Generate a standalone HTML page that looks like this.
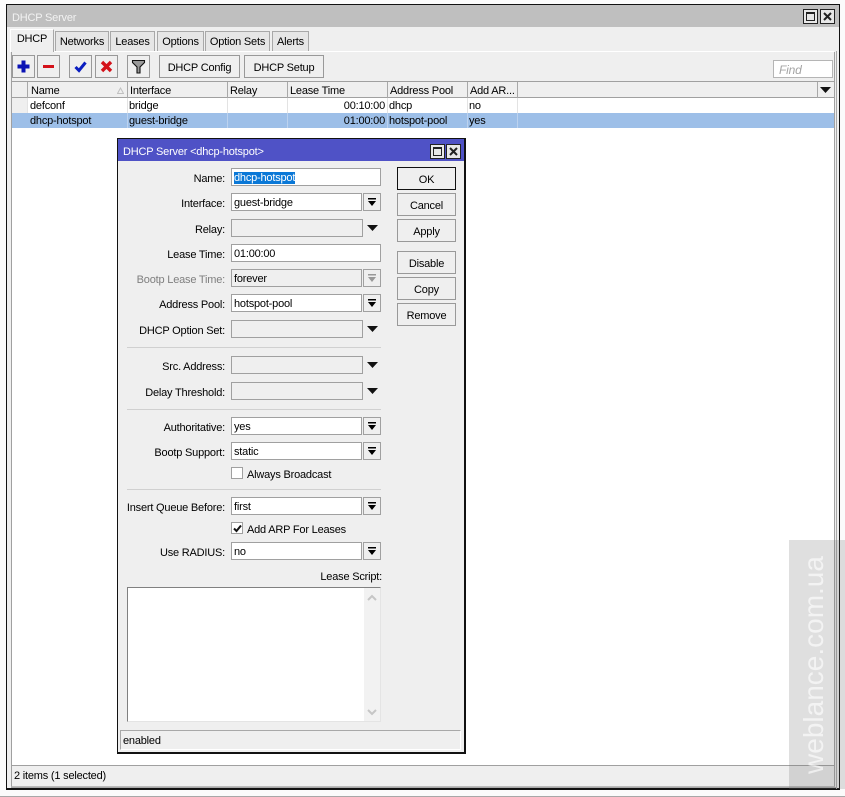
<!DOCTYPE html>
<html><head><meta charset="utf-8">
<style>
html,body{margin:0;padding:0;background:#fff;}
#r{position:relative;width:845px;height:797px;overflow:hidden;background:#fbfbfb;font:11px/14px "Liberation Sans",sans-serif;letter-spacing:-.2px;color:#000;}
#r div,#r svg{position:absolute;box-sizing:border-box;}
.t{white-space:nowrap;}
.tab{top:31px;height:20px;background:#e6e6e6;border:1px solid #a8a8a8;border-bottom:0;text-align:center;line-height:21px;white-space:nowrap;}
.b{background:#efefef;border:1px solid #999;text-align:center;white-space:nowrap;line-height:24px;height:23px;}
.h{top:82px;height:16px;border-right:1px solid #a8a8a8;line-height:19px;padding-left:2px;white-space:nowrap;}
.c{height:15px;line-height:17px;padding-left:1px;border-right:1px solid #e3e3e3;white-space:nowrap;}
.l{left:118px;width:107px;text-align:right;white-space:nowrap;margin-top:1px;}
.i{background:#fff;border:1px solid #a0a0a0;height:18px;line-height:19px;padding-left:2px;white-space:nowrap;left:231px;width:131px;}
.w{width:150px;}
.g{background:#efefef;width:132px;}
.d{left:363px;width:18px;height:18px;background:#efefef;border:1px solid #a0a0a0;}
.s{left:127px;width:254px;height:1px;background:#d0d0d0;}
.tr{left:367px;width:11px;height:6px;}
.wb{background:#e8e8e8;border:1px solid #222;}
</style></head><body>
<div id="r">
<!-- main window -->
<div style="left:0;top:796px;width:845px;height:1px;background:#a8a8a8"></div>
<div style="left:6px;top:4px;width:834px;height:786px;background:#efefef;border:1px solid #111;border-width:1px 1px 2px 1px"></div>
<div style="left:7px;top:5px;width:832px;height:22px;background:#bfbfbf"></div>
<div class="t" style="left:12px;top:11px;color:#f2f2f2;">DHCP Server</div>
<div class="wb" style="left:803px;top:9px;width:15px;height:15px"><div style="left:2px;top:2px;width:9px;height:9px;border:1px solid #222;border-top-width:2px"></div></div>
<div class="wb" style="left:820px;top:9px;width:15px;height:15px"><svg style="left:2px;top:2px" width="9" height="9"><path d="M1 1L8 8M8 1L1 8" stroke="#222" stroke-width="2"/></svg></div>

<!-- tabs -->
<div style="left:54px;top:51px;width:780px;height:1px;background:#fff"></div>
<div style="left:10px;top:29px;width:44px;height:23px;background:#efefef;border:1px solid #fff;border-bottom:0;border-right-color:#a8a8a8;text-align:center;line-height:19px;">DHCP</div>
<div class="tab" style="left:55px;width:54px">Networks</div>
<div class="tab" style="left:110px;width:45px">Leases</div>
<div class="tab" style="left:157px;width:47px">Options</div>
<div class="tab" style="left:205px;width:65px">Option Sets</div>
<div class="tab" style="left:272px;width:37px">Alerts</div>

<!-- toolbar -->
<div class="b" style="left:12px;top:55px;width:23px"><svg style="left:3px;top:3px" width="15" height="15"><path d="M7.5 1.5V13.5M1.5 7.5H13.5" stroke="#0a12b4" stroke-width="4"/></svg></div>
<div class="b" style="left:37px;top:55px;width:23px"><svg style="left:3px;top:3px" width="15" height="15"><path d="M2 7.5H13" stroke="#d4121a" stroke-width="3"/></svg></div>
<div class="b" style="left:69px;top:55px;width:23px"><svg style="left:3px;top:3px" width="15" height="15"><path d="M2.5 8L6 11.5L12.5 3.5" fill="none" stroke="#0a1ec0" stroke-width="3"/></svg></div>
<div class="b" style="left:95px;top:55px;width:23px"><svg style="left:3px;top:3px" width="15" height="15"><path d="M3 3L12 12M12 3L3 12" stroke="#d4121a" stroke-width="3.4"/></svg></div>
<div class="b" style="left:127px;top:55px;width:23px"><svg style="left:3px;top:3px" width="15" height="15"><path d="M1.5 1.5H13.5V3.5L9 8V14L6 14V8L1.5 3.5Z" fill="#9a9a9a" stroke="#111" stroke-width="1.1"/></svg></div>
<div class="b" style="left:159px;top:55px;width:81px">DHCP Config</div>
<div class="b" style="left:244px;top:55px;width:80px">DHCP Setup</div>
<div style="left:773px;top:60px;width:60px;height:18px;background:#fff;border:1px solid #b5b5b5;font-style:italic;color:#a5a5a5;padding-left:5px;font-size:12px;line-height:18px">Find</div>

<!-- frame lines and table -->
<div style="left:11px;top:52px;width:1px;height:30px;background:#a0a0a0"></div>
<div style="left:834px;top:52px;width:1px;height:30px;background:#a0a0a0"></div>
<div style="left:11px;top:81px;width:824px;height:685px;background:#fff;border:1px solid #a0a0a0;border-bottom:0"></div>
<div style="left:12px;top:82px;width:822px;height:16px;background:#efefef;border-bottom:1px solid #a0a0a0"></div>
<div class="h" style="left:12px;width:16px"></div>
<div class="h" style="left:28px;width:100px;padding-left:3px">Name</div>
<svg style="left:117px;top:87px" width="7" height="7"><path d="M3.5 1L6.5 6.5H0.5Z" fill="none" stroke="#c0c0c0"/></svg>
<div class="h" style="left:128px;width:100px">Interface</div>
<div class="h" style="left:228px;width:60px">Relay</div>
<div class="h" style="left:288px;width:100px">Lease Time</div>
<div class="h" style="left:388px;width:80px">Address Pool</div>
<div class="h" style="left:468px;width:50px">Add AR...</div>
<div class="h" style="left:817px;width:17px;border-left:1px solid #a8a8a8;border-right:0"></div>
<svg style="left:820px;top:87px" width="11" height="7"><path d="M0 0H11L5.5 6Z" fill="#111"/></svg>

<div style="left:12px;top:98px;width:16px;height:15px;background:#efefef;border-right:1px solid #e3e3e3"></div>
<div style="left:12px;top:113px;width:822px;height:15px;background:#9dbfe8"></div>
<div class="c" style="left:28px;top:98px;width:100px;padding-left:2px">defconf</div>
<div class="c" style="left:128px;top:98px;width:100px">bridge</div>
<div class="c" style="left:228px;top:98px;width:60px"></div>
<div class="c" style="left:288px;top:98px;width:100px;text-align:right;padding-right:2px">00:10:00</div>
<div class="c" style="left:388px;top:98px;width:80px">dhcp</div>
<div class="c" style="left:468px;top:98px;width:50px">no</div>
<div class="c" style="left:28px;top:113px;width:100px;padding-left:2px;border-color:#bcd2ee">dhcp-hotspot</div>
<div class="c" style="left:128px;top:113px;width:100px;border-color:#bcd2ee">guest-bridge</div>
<div class="c" style="left:228px;top:113px;width:60px;border-color:#bcd2ee"></div>
<div class="c" style="left:288px;top:113px;width:100px;text-align:right;padding-right:2px;border-color:#bcd2ee">01:00:00</div>
<div class="c" style="left:388px;top:113px;width:80px;border-color:#bcd2ee">hotspot-pool</div>
<div class="c" style="left:468px;top:113px;width:50px;border-color:#bcd2ee">yes</div>

<!-- status -->
<div style="left:11px;top:765px;width:824px;height:22px;background:#efefef;border:1px solid #a0a0a0;border-bottom-color:#bbb"></div>
<div class="t" style="left:14px;top:769px">2 items (1 selected)</div>
<div style="left:836px;top:51px;width:1px;height:738px;background:#a8a8a8"></div>
<div style="left:11px;top:787px;width:826px;height:1px;background:#a8a8a8"></div>

<!-- dialog -->
<div style="left:117px;top:138px;width:349px;height:616px;background:#efefef;border:1px solid #111;border-width:1px 2px 2px 1px"></div>
<div style="left:118px;top:139px;width:346px;height:22px;background:#4f52c6"></div>
<div class="t" style="left:123px;top:145px;color:#fff">DHCP Server &lt;dhcp-hotspot&gt;</div>
<div class="wb" style="left:430px;top:144px;width:15px;height:15px"><div style="left:2px;top:2px;width:9px;height:9px;border:1px solid #222;border-top-width:2px"></div></div>
<div class="wb" style="left:446px;top:144px;width:15px;height:15px"><svg style="left:2px;top:2px" width="9" height="9"><path d="M1 1L8 8M8 1L1 8" stroke="#222" stroke-width="2"/></svg></div>

<div class="b" style="left:397px;top:167px;width:59px;border-color:#111">OK</div>
<div class="b" style="left:397px;top:193px;width:59px">Cancel</div>
<div class="b" style="left:397px;top:219px;width:59px">Apply</div>
<div class="b" style="left:397px;top:251px;width:59px">Disable</div>
<div class="b" style="left:397px;top:277px;width:59px">Copy</div>
<div class="b" style="left:397px;top:303px;width:59px">Remove</div>

<div class="l t" style="top:171px">Name:</div>
<div class="i w" style="top:168px"><span style="background:#0a78d7;color:#fff;">dhcp-hotspot</span></div>
<div class="l t" style="top:196px">Interface:</div>
<div class="i" style="top:193px">guest-bridge</div>
<div class="d" style="top:193px"><svg style="left:3px;top:2px" width="10" height="12"><path d="M1 2H9V3.5H1ZM1 5H9L5 10Z" fill="#000"/></svg></div>
<div class="l t" style="top:222px">Relay:</div>
<div class="i g" style="top:219px"></div>
<svg class="tr" style="top:225px" width="11" height="6"><path d="M0 0H11L5.5 6Z" fill="#111"/></svg>
<div class="l t" style="top:247px">Lease Time:</div>
<div class="i w" style="top:244px">01:00:00</div>
<div class="l t" style="top:272px;color:#7f7f7f">Bootp Lease Time:</div>
<div class="i" style="top:269px;background:#efefef">forever</div>
<div class="d" style="top:269px"><svg style="left:3px;top:2px" width="10" height="12"><path d="M1 2H9V3.5H1ZM1 5H9L5 10Z" fill="#999"/></svg></div>
<div class="l t" style="top:297px">Address Pool:</div>
<div class="i" style="top:294px">hotspot-pool</div>
<div class="d" style="top:294px"><svg style="left:3px;top:2px" width="10" height="12"><path d="M1 2H9V3.5H1ZM1 5H9L5 10Z" fill="#000"/></svg></div>
<div class="l t" style="top:323px">DHCP Option Set:</div>
<div class="i g" style="top:320px"></div>
<svg class="tr" style="top:326px" width="11" height="6"><path d="M0 0H11L5.5 6Z" fill="#111"/></svg>
<div class="s" style="top:347px"></div>
<div class="l t" style="top:359px">Src. Address:</div>
<div class="i g" style="top:356px"></div>
<svg class="tr" style="top:362px" width="11" height="6"><path d="M0 0H11L5.5 6Z" fill="#111"/></svg>
<div class="l t" style="top:385px">Delay Threshold:</div>
<div class="i g" style="top:382px"></div>
<svg class="tr" style="top:388px" width="11" height="6"><path d="M0 0H11L5.5 6Z" fill="#111"/></svg>
<div class="s" style="top:409px"></div>
<div class="l t" style="top:420px">Authoritative:</div>
<div class="i" style="top:417px">yes</div>
<div class="d" style="top:417px"><svg style="left:3px;top:2px" width="10" height="12"><path d="M1 2H9V3.5H1ZM1 5H9L5 10Z" fill="#000"/></svg></div>
<div class="l t" style="top:445px">Bootp Support:</div>
<div class="i" style="top:442px">static</div>
<div class="d" style="top:442px"><svg style="left:3px;top:2px" width="10" height="12"><path d="M1 2H9V3.5H1ZM1 5H9L5 10Z" fill="#000"/></svg></div>
<div style="left:231px;top:467px;width:12px;height:12px;background:#fff;border:1px solid #a0a0a0"></div>
<div class="t" style="left:247px;top:468px">Always Broadcast</div>
<div class="s" style="top:489px"></div>
<div class="l t" style="top:500px">Insert Queue Before:</div>
<div class="i" style="top:497px">first</div>
<div class="d" style="top:497px"><svg style="left:3px;top:2px" width="10" height="12"><path d="M1 2H9V3.5H1ZM1 5H9L5 10Z" fill="#000"/></svg></div>
<div style="left:231px;top:522px;width:12px;height:12px;background:#fff;border:1px solid #a0a0a0"><svg style="left:1px;top:1px" width="9" height="9"><path d="M1 4.5L3.5 7L8 1.5" fill="none" stroke="#111" stroke-width="2"/></svg></div>
<div class="t" style="left:247px;top:523px">Add ARP For Leases</div>
<div class="l t" style="top:545px">Use RADIUS:</div>
<div class="i" style="top:542px">no</div>
<div class="d" style="top:542px"><svg style="left:3px;top:2px" width="10" height="12"><path d="M1 2H9V3.5H1ZM1 5H9L5 10Z" fill="#000"/></svg></div>
<div class="t" style="left:250px;width:132px;top:570px;text-align:right">Lease Script:</div>
<div style="left:127px;top:587px;width:254px;height:135px;background:#fff;border:1px solid #e4e4e4;border-top:1px solid #808080;border-left:1px solid #808080"></div>
<div style="left:364px;top:588px;width:16px;height:133px;background:#f2f2f2"></div>
<svg style="left:367px;top:594px" width="10" height="7"><path d="M1 6L5 2L9 6" fill="none" stroke="#c6c6c6" stroke-width="2"/></svg>
<svg style="left:367px;top:709px" width="10" height="7"><path d="M1 1L5 5L9 1" fill="none" stroke="#c6c6c6" stroke-width="2"/></svg>
<div style="left:120px;top:730px;width:341px;height:20px;border:1px solid #a8a8a8;border-right-color:#fff;border-bottom-color:#fff;line-height:20px;padding-left:2px">enabled</div>

<!-- watermark -->
<div style="left:789px;top:540px;width:56px;height:249px;background:rgba(110,110,110,.22)"></div>
<div class="t" style="left:814px;top:665px;width:0;height:0;"><div class="t" style="left:-110px;top:-21px;width:220px;height:42px;line-height:42px;font-size:28px;letter-spacing:0;color:rgba(255,255,255,.62);transform:rotate(-90deg);text-align:center;">weblance.com.ua</div></div>
</div>
</body></html>
